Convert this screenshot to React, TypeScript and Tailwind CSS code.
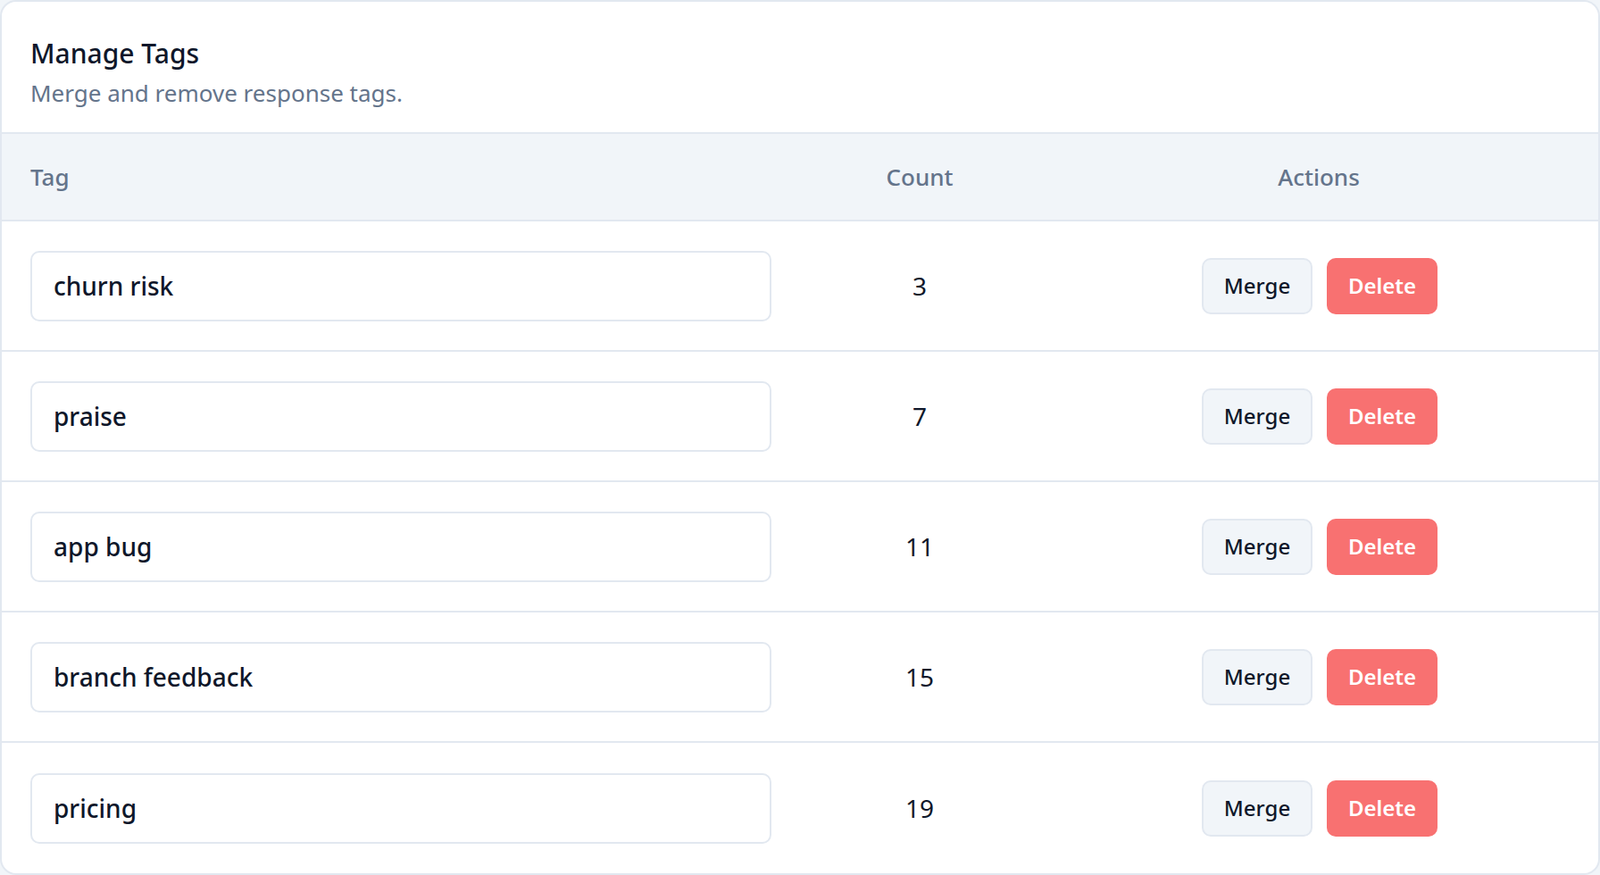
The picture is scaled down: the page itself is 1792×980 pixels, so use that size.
export default function App() {
  const rows = [
    ["churn risk", 3],
    ["praise", 7],
    ["app bug", 11],
    ["branch feedback", 15],
    ["pricing", 19],
  ] as const;
  return (
    <div className="w-[1792px] h-[980px] bg-[#f1f5f9] font-['Inter',sans-serif]">
      <div className="h-[980px] bg-white border-2 border-[#e2e8f0] rounded-[18px] overflow-hidden flex flex-col">
        <div className="h-[148px] px-[32px] pt-[36px] border-b-2 border-[#e2e8f0] shrink-0">
          <h1 className="text-[30px] leading-[44px] font-medium text-[#0f172a]">Manage Tags</h1>
          <p className="text-[26px] leading-[40px] text-[#64748b] mt-[2px]">Merge and remove response tags.</p>
        </div>
        <div className="h-[98px] bg-[#f1f5f9] border-b-2 border-[#e2e8f0] grid grid-cols-[894px_268px_1fr] items-center text-[26px] font-medium text-[#64748b] shrink-0">
          <div className="pl-[32px]">Tag</div>
          <div className="text-center">Count</div>
          <div className="text-center">Actions</div>
        </div>
        {rows.map(([t, c], i) => (
          <div
            key={t}
            className={`h-[146px] grid grid-cols-[894px_268px_1fr] items-center shrink-0 ${i < rows.length - 1 ? "border-b-2 border-[#e2e8f0]" : ""}`}
          >
            <div className="pl-[32px] pr-[32px]">
              <div className="h-[79px] border-2 border-[#e2e8f0] rounded-[10px] flex items-center px-[24px] text-[28px] font-medium text-[#0f172a]">
                {t}
              </div>
            </div>
            <div className="text-center text-[28px] text-[#0f172a]">{c}</div>
            <div className="flex justify-center gap-[16px] pl-[2px]">
              <button className="w-[124px] h-[63px] bg-[#f1f5f9] border-2 border-[#e2e8f0] rounded-[10px] text-[24px] font-medium text-[#0f172a]">Merge</button>
              <button className="w-[124px] h-[63px] bg-[#f87171] rounded-[10px] text-[24px] font-semibold text-white">Delete</button>
            </div>
          </div>
        ))}
      </div>
    </div>
  );
}
